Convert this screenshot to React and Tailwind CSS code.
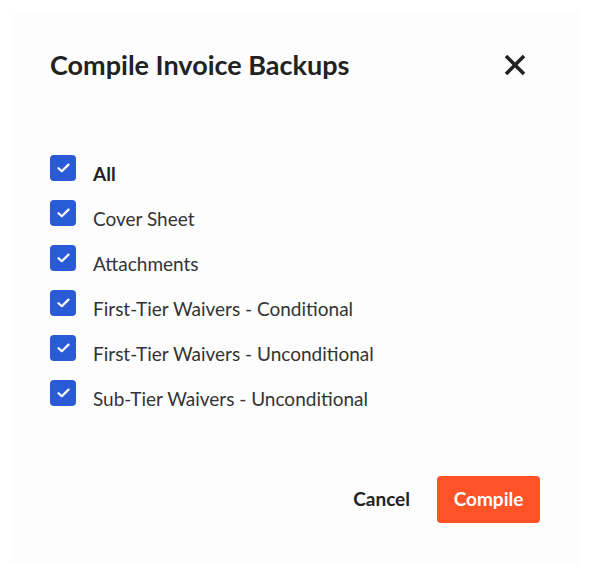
import { useState } from "react";

const OPTIONS = [
  "Cover Sheet",
  "Attachments",
  "First-Tier Waivers - Conditional",
  "First-Tier Waivers - Unconditional",
  "Sub-Tier Waivers - Unconditional",
];

function Box({ checked }) {
  return (
    <span
      className={
        "flex h-[26px] w-[26px] shrink-0 items-center justify-center rounded-[4px] " +
        (checked ? "bg-[#2a5bd7]" : "border-2 border-[#9aa3b5] bg-white")
      }
    >
      {checked && (
        <svg width="13" height="10" viewBox="0 0 13 10" fill="none">
          <path
            d="M1.5 5.2 L4.8 8.2 L11.5 1.6"
            stroke="white"
            strokeWidth="2.2"
            strokeLinecap="round"
            strokeLinejoin="round"
          />
        </svg>
      )}
    </span>
  );
}

export default function App() {
  const [checked, setChecked] = useState(() => OPTIONS.map(() => true));
  const all = checked.every(Boolean);

  const toggle = (i) => setChecked((c) => c.map((v, j) => (j === i ? !v : v)));

  return (
    <div className="min-h-screen bg-white p-[10px] font-['Lato','Open_Sans',sans-serif]">
      <div className="flex h-[555px] flex-col bg-[#fdfdfd] pl-[40px] pr-[40px] pt-[39px]">
        <div className="flex h-8 items-center justify-between">
          <h1 className="text-[27px] font-bold leading-8 text-[#222]">Compile Invoice Backups</h1>
          <button className="mr-[14px] flex h-[22px] w-[22px] items-center justify-center">
            <svg width="22" height="22" viewBox="0 0 22 22" fill="none">
              <path d="M2 2 L20 20 M20 2 L2 20" stroke="#222" strokeWidth="3.6" />
            </svg>
          </button>
        </div>

        <ul className="mt-[74px] flex flex-col gap-[19px]">
          <li
            className="flex h-[26px] cursor-pointer items-center gap-[17px]"
            onClick={() => setChecked(OPTIONS.map(() => !all))}
          >
            <Box checked={all} />
            <span className="mt-[12px] text-[19px] font-bold leading-[26px] text-[#222]">All</span>
          </li>
          {OPTIONS.map((label, i) => (
            <li key={label} className="flex h-[26px] cursor-pointer items-center gap-[17px]" onClick={() => toggle(i)}>
              <Box checked={checked[i]} />
              <span className="mt-[12px] text-[19px] leading-[26px] text-[#333]">{label}</span>
            </li>
          ))}
        </ul>

        <div className="mt-auto mb-[42px] flex items-center justify-end gap-[27px]">
          <button className="text-[19px] font-bold text-[#222]">Cancel</button>
          <button className="h-[47px] w-[103px] rounded-[4px] bg-[#ff5226] text-[19px] font-bold text-white">
            Compile
          </button>
        </div>
      </div>
    </div>
  );
}
